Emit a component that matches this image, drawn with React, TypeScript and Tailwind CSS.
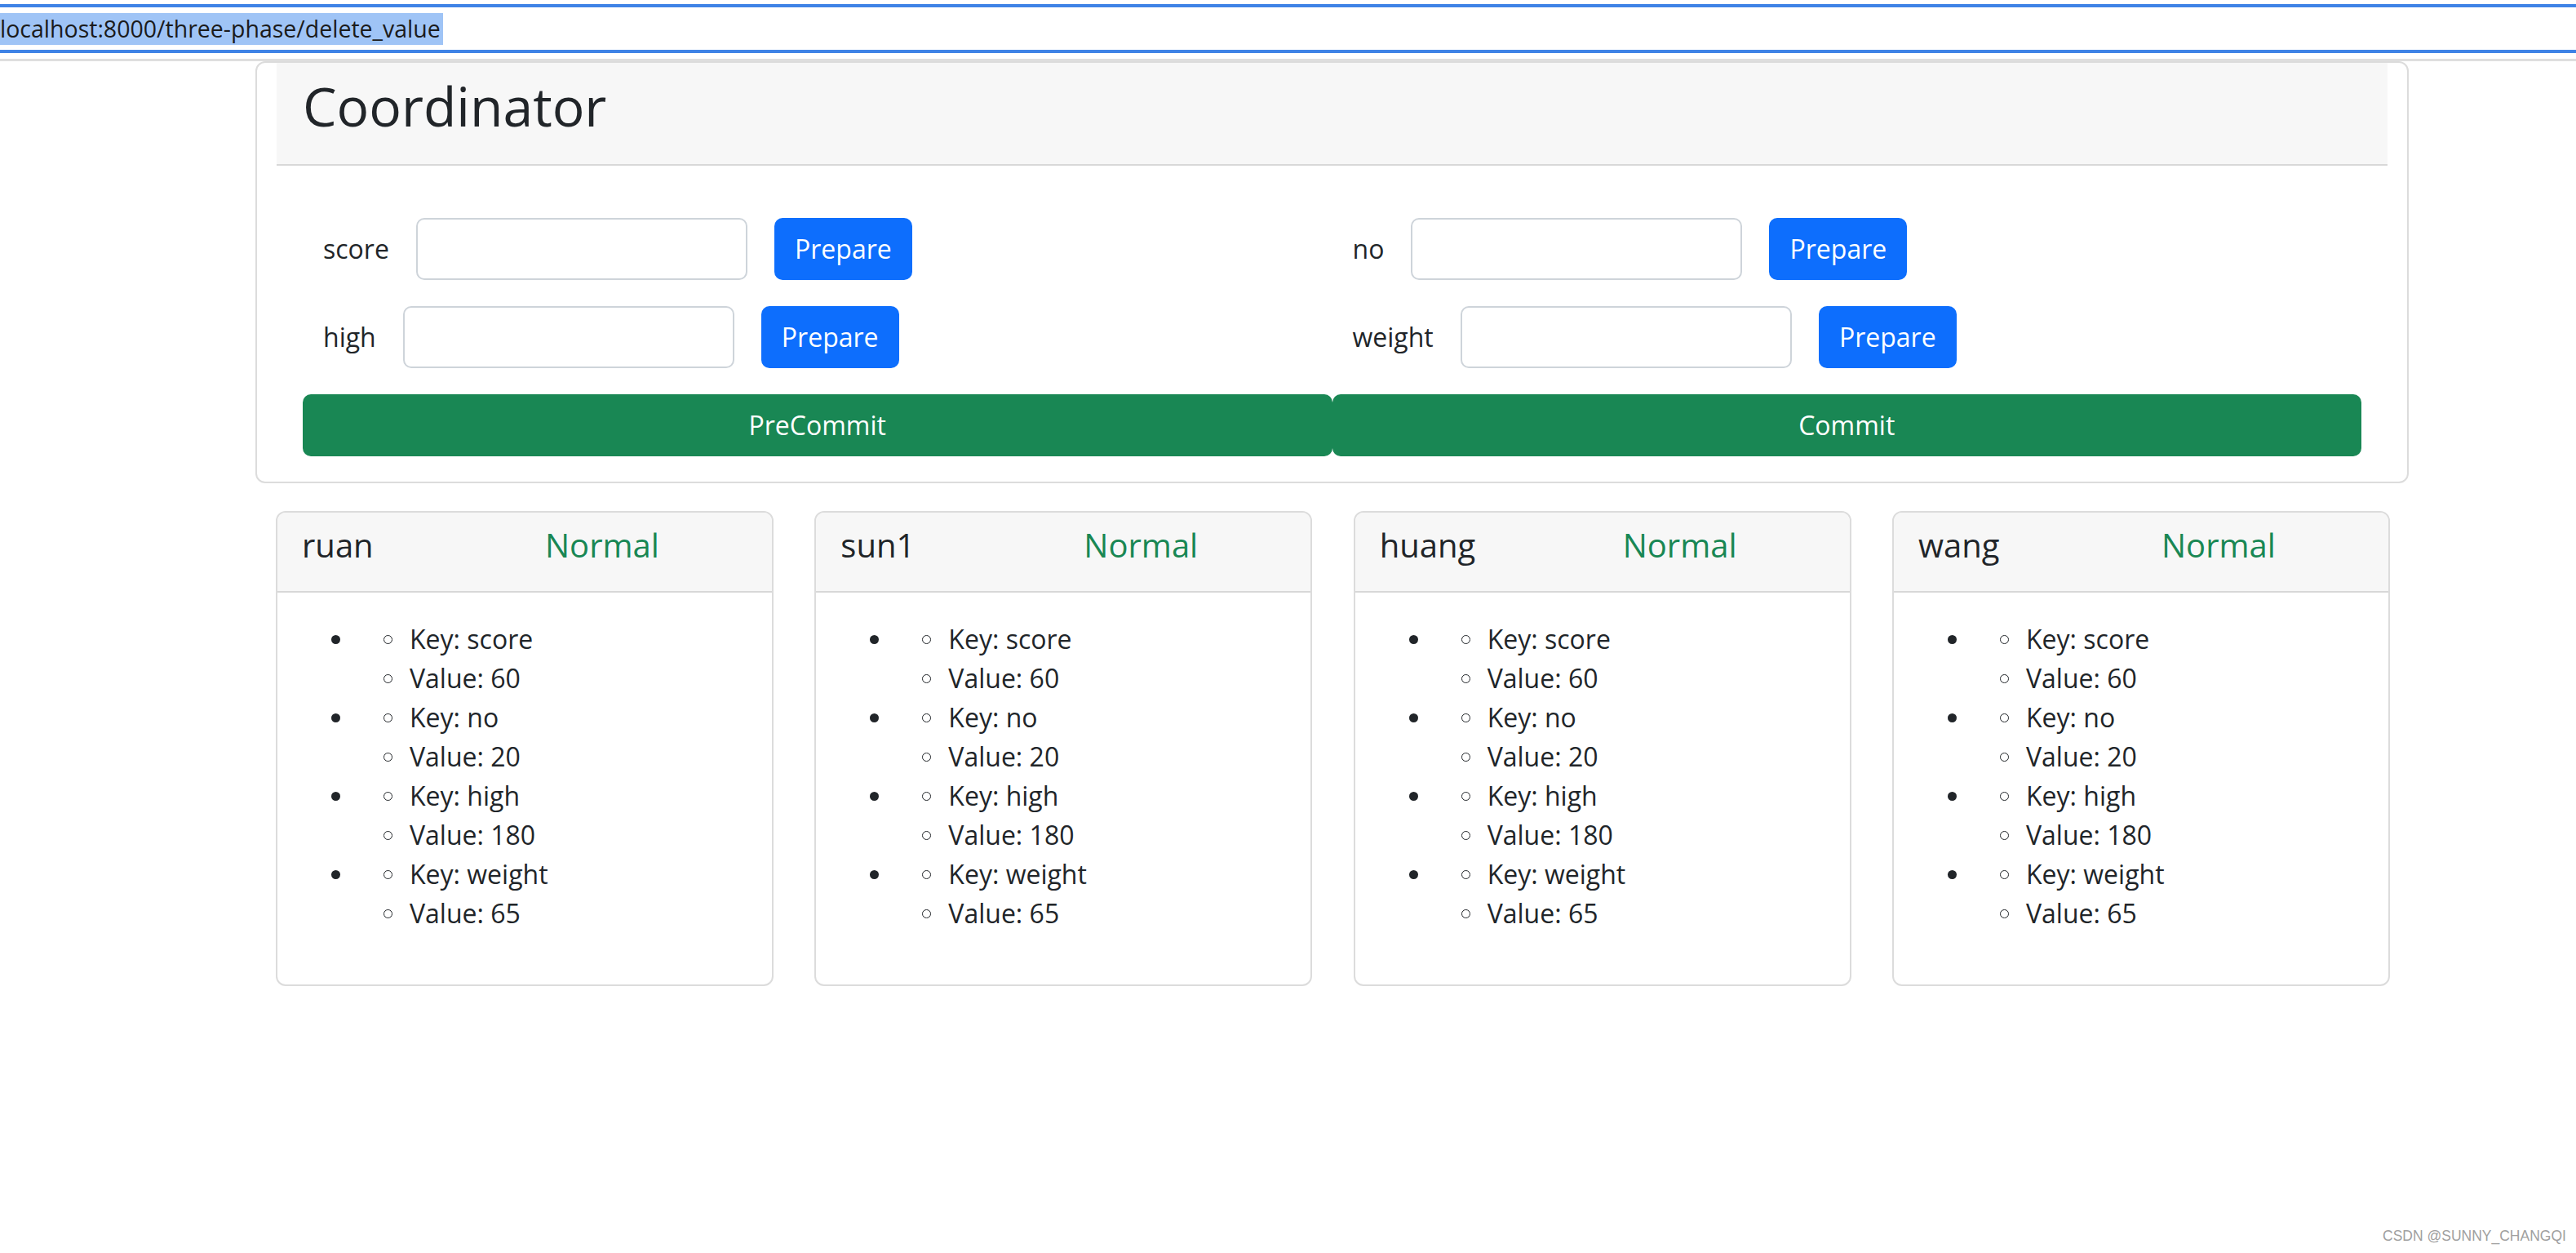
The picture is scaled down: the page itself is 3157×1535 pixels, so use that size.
import React from "react";

const nodes = ["ruan", "sun1", "huang", "wang"];
const kv: [string, string][] = [
  ["score", "60"],
  ["no", "20"],
  ["high", "180"],
  ["weight", "65"],
];

function FieldGroup({ label }: { label: string }) {
  return (
    <div className="w-1/2 h-[76px] pl-[25px] flex items-center">
      <label className="text-[32px] leading-[48px] mr-[33px]">{label}</label>
      <input
        type="text"
        className="w-[406px] h-[76px] border-2 border-[#ced4da] rounded-[10px] bg-white outline-none"
      />
      <button className="ml-[33px] w-[169px] h-[76px] rounded-[10px] bg-[#0d6efd] text-white text-[32px] leading-[48px]">
        Prepare
      </button>
    </div>
  );
}

function NodeCard({ name }: { name: string }) {
  return (
    <div className="w-[610px] border-2 border-[#dcdcdc] rounded-[12px] overflow-hidden bg-white">
      <div className="h-[98px] bg-[#f7f7f7] border-b-2 border-[#d8d8d8] flex px-[30px] pt-[12px]">
        <div className="w-[298px] text-[40px] leading-[56px]">{name}</div>
        <div className="text-[40px] leading-[56px] text-[#198754]">Normal</div>
      </div>
      <div className="pt-[33px] pl-[66px] pb-[63px]">
        {kv.map(([k, v]) => (
          <div key={k} className="flex">
            <div className="w-[64px] h-[48px] flex items-center">
              <span className="block w-[11px] h-[11px] rounded-full bg-[#212529]" />
            </div>
            <div>
              <div className="flex items-center h-[48px]">
                <span className="block w-[11px] h-[11px] rounded-full border-[1.5px] border-[#212529] mr-[21px]" />
                <span className="text-[32px] leading-[48px]">Key: {k}</span>
              </div>
              <div className="flex items-center h-[48px]">
                <span className="block w-[11px] h-[11px] rounded-full border-[1.5px] border-[#212529] mr-[21px]" />
                <span className="text-[32px] leading-[48px]">Value: {v}</span>
              </div>
            </div>
          </div>
        ))}
      </div>
    </div>
  );
}

export default function App() {
  return (
    <div className="relative w-[3157px] h-[1535px] bg-white overflow-hidden font-['Open_Sans',sans-serif] text-[#212529]">
      {/* address bar */}
      <div className="h-[5px]" />
      <div className="h-[4px] bg-[#3f83e6]" />
      <div className="h-[52px] pt-[7px]">
        <span className="inline-block pr-[3px] bg-[#9fc4f6] text-[28.5px] leading-[39px] text-[#1b1b1b]">
          localhost:8000/three-phase/delete_value
        </span>
      </div>
      <div className="h-[4px] bg-[#3f83e6]" />
      <div className="h-[7px]" />
      <div className="h-[3px] bg-[#dedede]" />

      {/* coordinator card */}
      <div className="ml-[313px] w-[2639px] border-2 border-[#dcdcdc] rounded-[12px] px-[24px] bg-white">
        <div className="h-[126px] bg-[#f7f7f7] border-b-2 border-[#d8d8d8] pl-[32px] pt-[13px]">
          <h1 className="text-[66px] leading-[79px]">Coordinator</h1>
        </div>
        <div className="px-[32px] pt-[64px] pb-[31px] flex flex-col gap-[32px]">
          <div className="flex">
            <FieldGroup label="score" />
            <FieldGroup label="no" />
          </div>
          <div className="flex">
            <FieldGroup label="high" />
            <FieldGroup label="weight" />
          </div>
          <div className="flex">
            <button className="w-1/2 h-[76px] rounded-[10px] bg-[#198754] text-white text-[32px] leading-[48px]">
              PreCommit
            </button>
            <button className="w-1/2 h-[76px] rounded-[10px] bg-[#198754] text-white text-[32px] leading-[48px]">
              Commit
            </button>
          </div>
        </div>
      </div>

      {/* node cards */}
      <div className="mt-[34px] ml-[338px] w-[2591px] flex justify-between">
        {nodes.map((n) => (
          <NodeCard key={n} name={n} />
        ))}
      </div>

      {/* watermark */}
      <div className="absolute left-[2920px] top-[1504px] text-[17.5px] leading-[20px] text-[#a0a0a0] font-['Liberation_Sans',Arial,sans-serif] [text-shadow:0_0_1px_#ffffff]">
        CSDN @SUNNY_CHANGQI
      </div>
    </div>
  );
}
